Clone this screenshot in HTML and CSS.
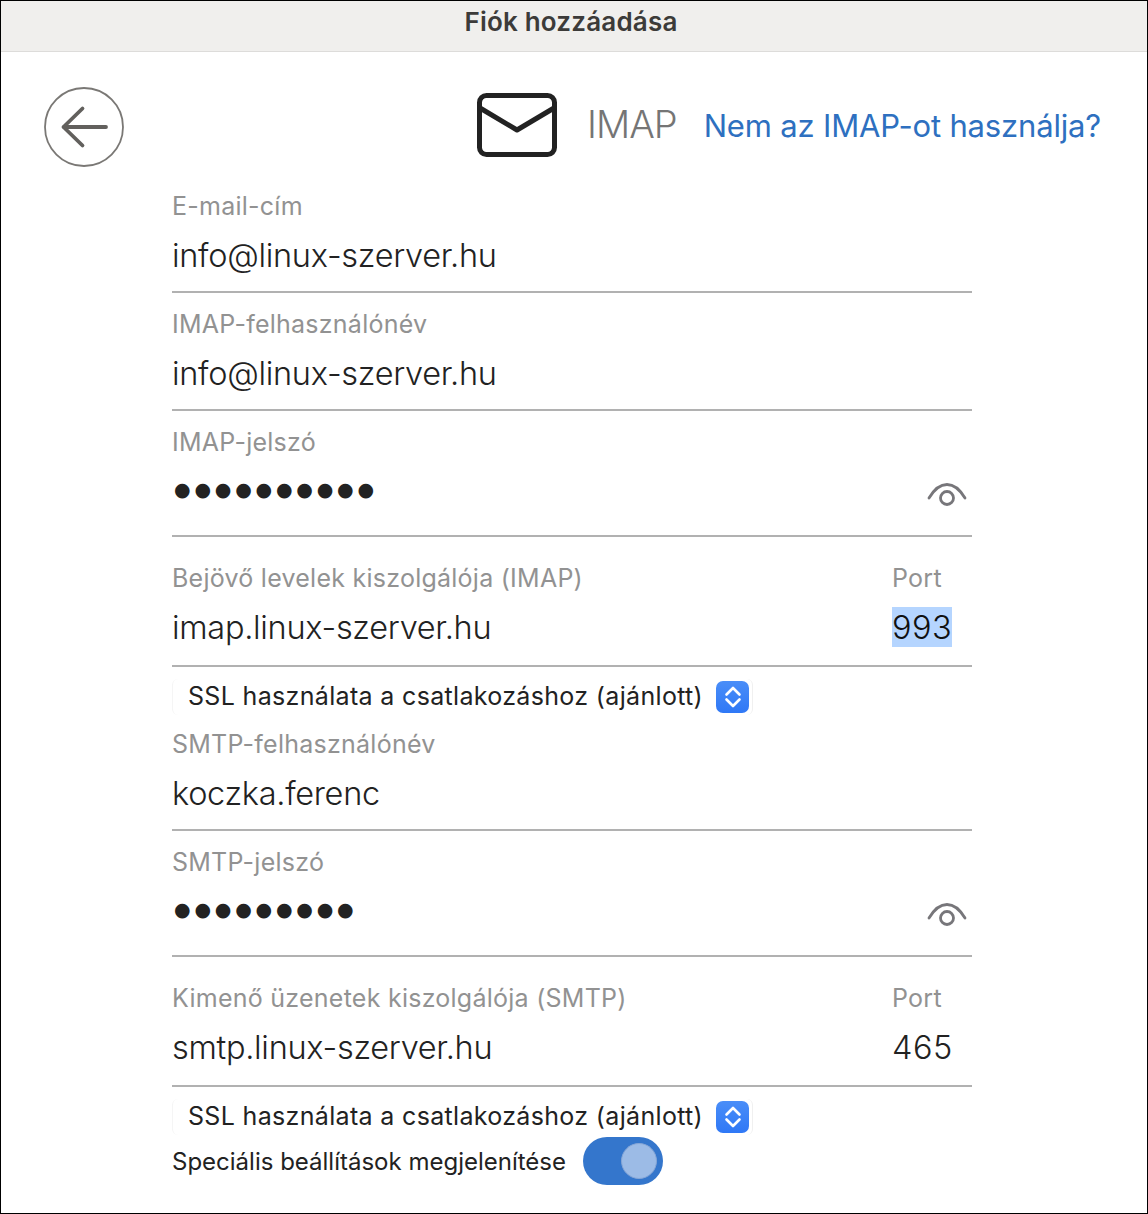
FILE: index.html
```html
<!DOCTYPE html>
<html lang="en">
<head>
  <meta charset="UTF-8" />
  <title>Fiók hozzáadása</title>
  <link rel="stylesheet" href="styles.css">
</head>
<body>
  <div class="window">
    <div class="titlebar">Fiók hozzáadása</div>

    <div class="header">
      <button class="back">
        <svg width="80" height="80" viewBox="0 0 80 80"><circle cx="40" cy="40" r="39" fill="none" stroke="#7a7875" stroke-width="1.8"/><path d="M19.5 40H62M38.5 21.5L19.5 40L38.5 58.5" fill="none" stroke="#62605d" stroke-width="3.8" stroke-linecap="round" stroke-linejoin="round"/></svg>
      </button>
      <svg class="mail-icon" width="80" height="64" viewBox="0 0 80 64"><rect x="2.5" y="2.5" width="75" height="59" rx="7" fill="none" stroke="#222" stroke-width="5"/><path d="M3 15L40 37L77 15" fill="none" stroke="#222" stroke-width="5" stroke-linejoin="round"/></svg>
      <span class="provider">IMAP</span>
      <a class="switch">Nem az IMAP-ot használja?</a>
    </div>

    <form class="form">
      <div class="field">
        <label>E-mail-cím</label>
        <div class="value">info@linux-szerver.hu</div>
      </div>
      <div class="field">
        <label>IMAP-felhasználónév</label>
        <div class="value">info@linux-szerver.hu</div>
      </div>
      <div class="field password">
        <label>IMAP-jelszó</label>
        <div class="value-row">
          <div class="dots">●●●●●●●●●●</div>
          <svg class="eye" width="40" height="26" viewBox="0 0 40 26"><path d="M2 16C8 6 14 2.5 20 2.5S32 6 38 16" fill="none" stroke="#77767a" stroke-width="2.8" stroke-linecap="round"/><circle cx="20" cy="16" r="6.5" fill="none" stroke="#77767a" stroke-width="2.8"/></svg>
        </div>
      </div>
      <div class="field server">
        <div class="col-main">
          <label>Bejövő levelek kiszolgálója (IMAP)</label>
          <div class="value">imap.linux-szerver.hu</div>
        </div>
        <div class="col-port">
          <label>Port</label>
          <div class="value"><span class="selected">993</span></div>
        </div>
      </div>
      <div class="select-row">
        <div class="select">SSL használata a csatlakozáshoz (ajánlott)
          <span class="stepper"><svg width="20" height="24" viewBox="0 0 20 24"><path d="M3.5 9.5L10 3L16.5 9.5M3.5 14.5L10 21L16.5 14.5" fill="none" stroke="#fff" stroke-width="2.6" stroke-linecap="round" stroke-linejoin="round"/></svg></span>
        </div>
      </div>

      <div class="field">
        <label>SMTP-felhasználónév</label>
        <div class="value">koczka.ferenc</div>
      </div>
      <div class="field password">
        <label>SMTP-jelszó</label>
        <div class="value-row">
          <div class="dots">●●●●●●●●●</div>
          <svg class="eye" width="40" height="26" viewBox="0 0 40 26"><path d="M2 16C8 6 14 2.5 20 2.5S32 6 38 16" fill="none" stroke="#77767a" stroke-width="2.8" stroke-linecap="round"/><circle cx="20" cy="16" r="6.5" fill="none" stroke="#77767a" stroke-width="2.8"/></svg>
        </div>
      </div>
      <div class="field server">
        <div class="col-main">
          <label>Kimenő üzenetek kiszolgálója (SMTP)</label>
          <div class="value">smtp.linux-szerver.hu</div>
        </div>
        <div class="col-port">
          <label>Port</label>
          <div class="value">465</div>
        </div>
      </div>
      <div class="select-row compact">
        <div class="select">SSL használata a csatlakozáshoz (ajánlott)
          <span class="stepper"><svg width="20" height="24" viewBox="0 0 20 24"><path d="M3.5 9.5L10 3L16.5 9.5M3.5 14.5L10 21L16.5 14.5" fill="none" stroke="#fff" stroke-width="2.6" stroke-linecap="round" stroke-linejoin="round"/></svg></span>
        </div>
      </div>

      <div class="toggle-row">
        <span>Speciális beállítások megjelenítése</span>
        <span class="toggle"><span class="knob"></span></span>
      </div>
    </form>
  </div>
</body>
</html>
```

FILE: styles.css
```css
* {
  box-sizing: border-box;
}

html, body {
  margin: 0;
  height: 100%;
  background: #fff;
}

body {
  font-family: Inter, "Liberation Sans", sans-serif;
  color: #222;
}

.window {
  height: 1214px;
  overflow: hidden;
  border: 1px solid #000;
  background: #fff;
}

.titlebar {
  height: 51px;
  background: #f0efed;
  border-bottom: 1px solid #dddcda;
  padding-right: 6px;
  text-align: center;
  font-size: 26px;
  font-weight: 600;
  letter-spacing: 0.2px;
  line-height: 42px;
  color: #3c3b39;
}

.header {
  display: flex;
  align-items: center;
  height: 80px;
  margin-top: 35px;
  padding-left: 43px;
}

.back {
  width: 80px;
  height: 80px;
  padding: 0;
  border: none;
  background: none;
  margin-right: 353px;
}

.back svg, .eye, .stepper svg {
  display: block;
}

.mail-icon {
  margin-right: 30px;
  margin-bottom: 4px;
}

.provider {
  font-size: 38px;
  font-weight: 300;
  color: #757575;
  letter-spacing: -1px;
  margin-right: 27px;
  margin-bottom: 6px;
}

.switch {
  font-size: 31px;
  letter-spacing: -0.17px;
  color: #2e70c0;
  white-space: nowrap;
  margin-bottom: 4px;
}

.form {
  width: 800px;
  margin-left: 171px;
  margin-top: 24px;
}

.field {
  height: 102px;
  border-bottom: 2px solid #b1b1b1;
}

.field + .field {
  height: 118px;
  padding-top: 16px;
}

.field + .field.password {
  height: 126px;
}

.field + .field.server {
  height: 130px;
  padding-top: 26px;
  display: flex;
  justify-content: space-between;
}

label {
  display: block;
  font-size: 25px;
  letter-spacing: 0.25px;
  line-height: 30px;
  color: #929292;
}

.value {
  font-size: 32.5px;
  font-weight: 350;
  letter-spacing: -0.3px;
  line-height: 40px;
  margin-top: 15px;
  color: #222;
}

.value-row {
  display: flex;
  justify-content: space-between;
  align-items: flex-start;
}

.dots {
  font-family: "DejaVu Sans", sans-serif;
  font-size: 19px;
  letter-spacing: 3.8px;
  line-height: 40px;
  margin-top: 12px;
  padding-left: 2px;
}

.eye {
  margin-top: 25px;
  margin-right: 5px;
}

.col-port {
  width: 80px;
}

.col-port .value {
  letter-spacing: 0.5px;
  line-height: 38px;
  margin-top: 14px;
  padding-top: 2px;
}

.selected {
  display: block;
  width: fit-content;
  margin-top: -2px;
  padding-top: 2px;
  background: #b5d5ff;
  color: #111;
}

.select-row {
  height: 62px;
  padding-top: 12px;
}

.select-row.compact {
  height: 50px;
}

.select {
  display: flex;
  align-items: center;
  justify-content: space-between;
  height: 36px;
  width: 581px;
  padding-left: 15px;
  padding-right: 3px;
  padding-bottom: 2px;
  font-size: 25px;
  letter-spacing: 0.33px;
  white-space: nowrap;
  border-left: 1px solid #f5f5f5;
  border-right: 1px solid #f0f0f0;
  border-radius: 6px;
}

.stepper {
  width: 33px;
  height: 32px;
  margin-top: 2px;
  border-radius: 7px;
  background: linear-gradient(#4a8ef8, #2f78f6);
  display: flex;
  align-items: center;
  justify-content: center;
}

.toggle-row {
  display: flex;
  align-items: center;
  gap: 17px;
  font-size: 24px;
}

.toggle {
  width: 80px;
  height: 48px;
  border-radius: 24px;
  background: #3476cc;
  display: flex;
  align-items: center;
  justify-content: flex-end;
  padding-right: 6px;
}

.knob {
  width: 36px;
  height: 36px;
  border-radius: 50%;
  background: #9cbbe6;
  border: 1px solid #86a6d6;
}
```
